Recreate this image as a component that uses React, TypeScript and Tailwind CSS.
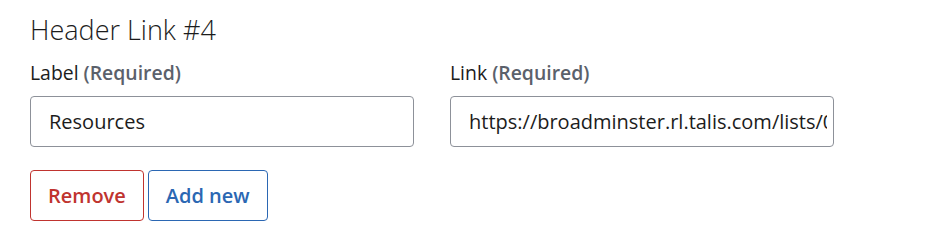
export default function App() {
  return (
    <div className="min-h-[252px] w-[944px] bg-white px-[30px] pt-[12px] font-['Open_Sans','Noto_Sans',sans-serif] text-[#1c1c1c]">
      <h2 className="text-[27px] font-light leading-[36px]">Header Link #4</h2>
      <div className="mt-[12px] flex gap-[36px]">
        <div className="w-[384px]">
          <label className="block text-[19.4px] leading-[26px]">
            Label <span className="font-semibold text-[#5b616b]">(Required)</span>
          </label>
          <input
            readOnly
            value="Resources"
            className="mt-[10px] block h-[51px] w-full rounded-[4px] border border-[#8d9199] pl-[18px] pr-[6px] text-[20px] text-[#1c1c1c] outline-none"
          />
        </div>
        <div className="w-[384px]">
          <label className="block text-[19.4px] leading-[26px]">
            Link <span className="font-semibold text-[#5b616b]">(Required)</span>
          </label>
          <input
            readOnly
            value="https://broadminster.rl.talis.com/lists/0A1B2C3D-4E5F"
            className="mt-[10px] block h-[51px] w-full rounded-[4px] border border-[#8d9199] pl-[18px] pr-[6px] text-[20px] text-[#1c1c1c] outline-none"
          />
        </div>
      </div>
      <div className="mt-[23px] flex gap-[4px]">
        <button className="h-[51px] rounded-[4px] border border-[#c0342f] px-[17px] text-[20px] font-semibold text-[#c0342f]">
          Remove
        </button>
        <button className="h-[51px] rounded-[4px] border border-[#2b67b3] px-[17px] text-[20px] font-semibold text-[#2b67b3]">
          Add new
        </button>
      </div>
    </div>
  )
}
